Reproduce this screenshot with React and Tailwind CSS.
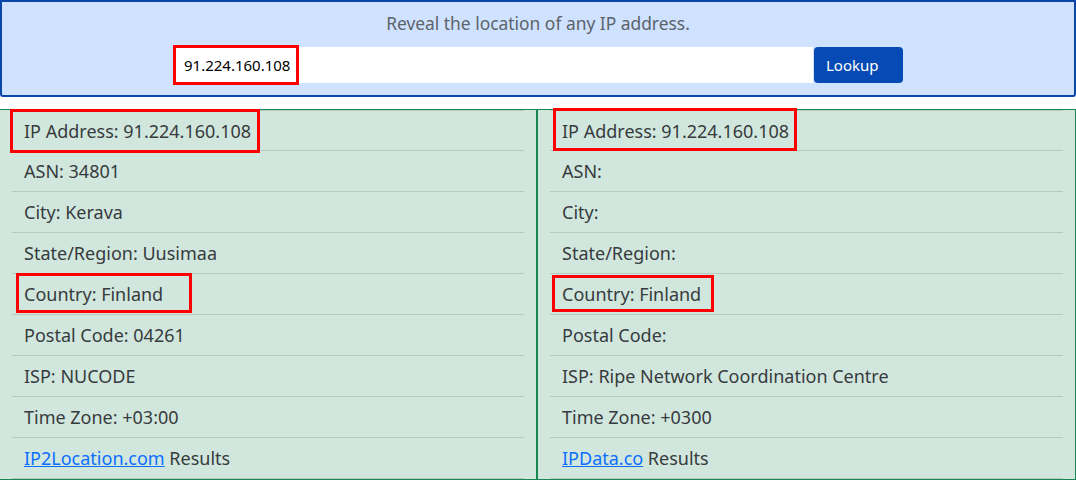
import React from "react";

const left = [
  { label: "IP Address: 91.224.160.108", box: "-left-[14px] -right-[9px] -top-[10px] -bottom-[10px]" },
  { label: "ASN: 34801" },
  { label: "City: Kerava" },
  { label: "State/Region: Uusimaa" },
  { label: "Country: Finland", box: "-left-[8px] -right-[29px] -top-[9px] -bottom-[7px]" },
  { label: "Postal Code: 04261" },
  { label: "ISP: NUCODE" },
  { label: "Time Zone: +03:00" },
];

const right = [
  { label: "IP Address: 91.224.160.108", box: "-left-[9px] -right-[8px] -top-[11px] -bottom-[8px]" },
  { label: "ASN:" },
  { label: "City:" },
  { label: "State/Region:" },
  { label: "Country: Finland", box: "-left-[10px] -right-[13px] -top-[7px] -bottom-[6px]" },
  { label: "Postal Code:" },
  { label: "ISP: Ripe Network Coordination Centre" },
  { label: "Time Zone: +0300" },
];

function Row({ item, first }) {
  return (
    <li
      className={`h-[41px] flex items-center px-3 border-b border-[#b8c9c0] ${first ? "border-t" : ""}`}
    >
      <span className="relative leading-6">
        {item.label}
        {item.box && (
          <span className={`absolute ${item.box} border-[3px] border-[#ff0000] pointer-events-none`} />
        )}
      </span>
    </li>
  );
}

function Panel({ items, site, className }) {
  return (
    <div className={`bg-[#d1e7dd] border-[#198754] px-3 ${className}`}>
      <ul>
        {items.map((item, i) => (
          <Row key={i} item={item} first={i === 0} />
        ))}
        <li className="h-[41px] flex items-center px-3 border-b border-[#b8c9c0]">
          <span className="leading-6">
            <a href="#" className="text-[#0d6efd] underline">{site}</a> Results
          </span>
        </li>
      </ul>
    </div>
  );
}

export default function App() {
  return (
    <div className="w-[1076px] h-[480px] overflow-hidden bg-white text-[18px] text-[#373b3e]" style={{ fontFamily: '"Noto Sans", "Open Sans", sans-serif' }}>
      <div className="h-[97px] bg-[#cfe2ff] border-2 border-[#0a47a9] rounded-b-[3px] flex flex-col items-center pt-[9px]">
        <p className="text-[#5c636a] text-[17.4px] leading-6">Reveal the location of any IP address.</p>
        <div className="flex mt-[12px] gap-px">
          <div className="w-[640px] h-[36px] bg-white flex items-center pl-[11px]">
            <span className="relative text-[15px] text-black">
              91.224.160.108
              <span className="absolute -left-[11px] -right-[9px] -top-[9px] -bottom-[9px] border-[3px] border-[#ff0000]" />
            </span>
          </div>
          <button className="w-[89px] h-[36px] rounded-[4px] bg-[#064bb5] text-white text-[15px] text-left pl-[12px]">
            Lookup
          </button>
        </div>
      </div>
      <div className="mt-[12px] grid grid-cols-[537px_539px] h-[371px]">
        <Panel items={left} site="IP2Location.com" className="border-t border-r border-b" />
        <Panel items={right} site="IPData.co" className="border" />
      </div>
    </div>
  );
}
